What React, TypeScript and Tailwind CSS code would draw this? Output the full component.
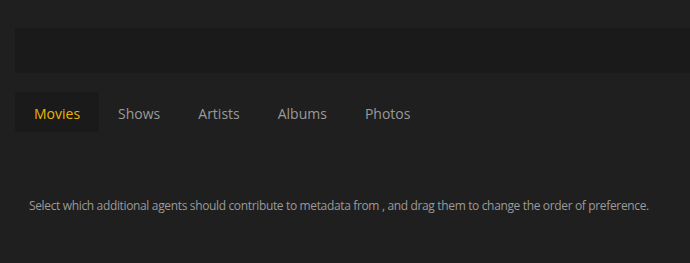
import React from "react";

export default function App() {
  const tabs = ["Movies", "Shows", "Artists", "Albums", "Photos"];
  return (
    <div
      className="w-[690px] h-[263px] bg-[#1f1f1f] overflow-hidden"
      style={{ fontFamily: '"Open Sans", "Noto Sans", sans-serif' }}
    >
      <div className="pt-[28px] pl-[15px]">
        <div className="h-[45px] bg-[#1a1a1a]" />
      </div>
      <div className="flex pl-[15px] mt-[19px]">
        {tabs.map((t, i) => (
          <div
            key={t}
            className={
              "h-[40px] px-[19px] pt-[2px] flex items-center text-[14px] rounded-[3px] " +
              (i === 0 ? "bg-[#1a1a1a] text-[#e8b40c]" : "text-[#9a9a9a]")
            }
          >
            {t}
          </div>
        ))}
      </div>
      <div className="pl-[29px] mt-[65px] text-[12px] text-[#9a9a9a] tracking-[-0.35px]">
        Select which additional agents should contribute to metadata from , and drag them to change the order of preference.
      </div>
    </div>
  );
}
